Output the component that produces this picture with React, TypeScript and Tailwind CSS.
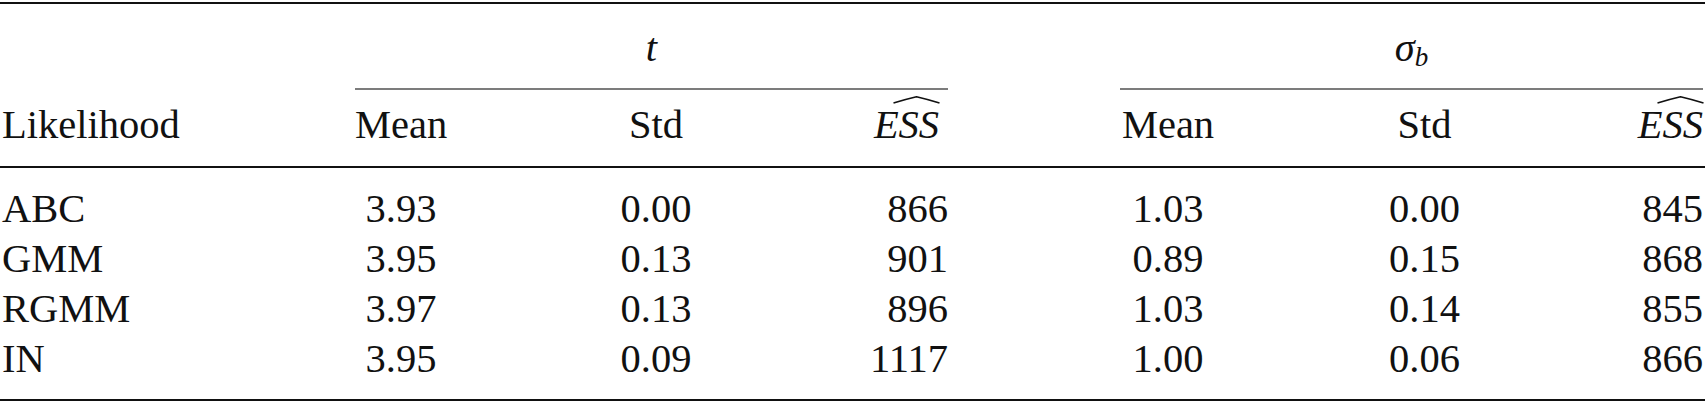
import React from "react";

const cols = "grid grid-cols-[355px_92px_418px_83px_172px_96px_417px_70px]";

function Hat() {
  return (
    <svg
      className="absolute left-[19px] top-[-4px]"
      width="47"
      height="8"
      viewBox="0 0 47 8"
      fill="none"
    >
      <path d="M0.5 7 Q12 3.5 23.5 0.8 Q35 3.5 46.5 7" stroke="#111" strokeWidth="1.6" strokeLinejoin="round" />
    </svg>
  );
}

function ESS() {
  return (
    <span className="relative inline-block italic">
      <Hat />
      ESS
    </span>
  );
}

const rows = [
  ["ABC", "3.93", "0.00", "866", "1.03", "0.00", "845"],
  ["GMM", "3.95", "0.13", "901", "0.89", "0.15", "868"],
  ["RGMM", "3.97", "0.13", "896", "1.03", "0.14", "855"],
  ["IN", "3.95", "0.09", "1117", "1.00", "0.06", "866"],
];

export default function App() {
  return (
    <div className="w-[1705px] h-[405px] overflow-hidden bg-white text-[#111] [font-family:'Liberation_Serif','Times_New_Roman',serif] text-[40.5px] leading-[50px]">
      <div className="mt-[2px] h-[2px] bg-[#111]" />
      <div className={`${cols} h-[69px] pt-[19px]`}>
        <div />
        <div className="col-span-3 text-center italic">t</div>
        <div />
        <div className="col-span-3 text-center">
          <span className="italic">σ</span>
          <span className="italic text-[27px] leading-none align-[-5px]">b</span>
        </div>
      </div>
      <div className={`${cols} mt-[15px]`}>
        <div />
        <div className="col-span-3 h-[2px] bg-[#7c7c7c]" />
        <div />
        <div className="col-span-3 h-[2px] bg-[#7c7c7c]" />
      </div>
      <div className={`${cols} mt-[10px]`}>
        <div className="pl-[2px]">Likelihood</div>
        <div className="text-center">Mean</div>
        <div className="text-center">Std</div>
        <div className="text-center">
          <ESS />
        </div>
        <div />
        <div className="text-center">Mean</div>
        <div className="text-center">Std</div>
        <div className="text-right">
          <ESS />
        </div>
      </div>
      <div className="mt-[16px] h-[2px] bg-[#111]" />
      <div className="pt-[16px]">
        {rows.map((r) => (
          <div key={r[0]} className={cols}>
            <div className="pl-[2px]">{r[0]}</div>
            <div className="text-center">{r[1]}</div>
            <div className="text-center">{r[2]}</div>
            <div className="text-right whitespace-nowrap">{r[3]}</div>
            <div />
            <div className="text-center">{r[4]}</div>
            <div className="text-center">{r[5]}</div>
            <div className="text-right">{r[6]}</div>
          </div>
        ))}
      </div>
      <div className="mt-[15px] h-[2px] bg-[#111]" />
    </div>
  );
}
